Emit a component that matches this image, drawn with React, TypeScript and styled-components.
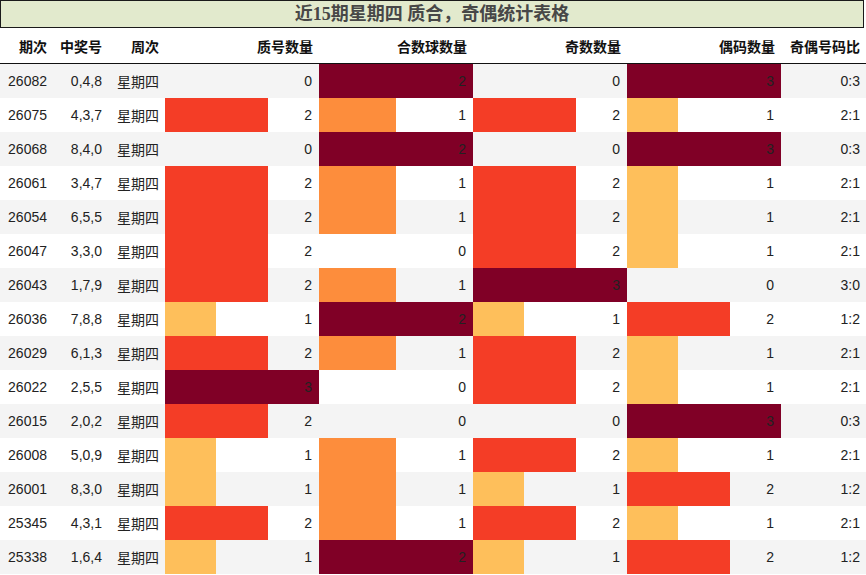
import React from "react";
import styled, { createGlobalStyle } from "styled-components";

const Global = createGlobalStyle`
  html, body { margin: 0; padding: 0; background: #fff; }
  body { font-family: "Liberation Sans", "Noto Sans CJK SC", sans-serif; }
  * { box-sizing: border-box; }
`;

const Page = styled.div`
  width: 866px;
`;

const Title = styled.div`
  width: 864px;
  height: 28px;
  border: 1px solid #1a1a1a;
  background: #e2eacd;
  color: #474747;
  font-family: "Liberation Serif", "Noto Sans CJK SC", serif;
  font-weight: bold;
  font-size: 18px;
  display: flex;
  align-items: center;
  justify-content: center;
  line-height: 1;
`;

const COLS = "53px 55px 57px 154px 154px 154px 154px 85px";

const HeaderRow = styled.div`
  display: grid;
  grid-template-columns: ${COLS};
  height: 36px;
  border-bottom: 1px solid #111;
`;

const HeadCell = styled.div`
  display: flex;
  align-items: center;
  justify-content: flex-end;
  padding-right: 6px;
  font-size: 14px;
  font-weight: bold;
  color: #111;
  white-space: nowrap;
`;

const Row = styled.div<{ $alt: boolean }>`
  display: grid;
  grid-template-columns: ${COLS};
  height: 34px;
  background: ${(p) => (p.$alt ? "#f4f4f4" : "#ffffff")};
`;

const Cell = styled.div`
  display: flex;
  align-items: center;
  justify-content: flex-end;
  padding-right: 6px;
  font-size: 14px;
  color: #222;
  white-space: nowrap;
`;

const BarCell = styled(Cell)<{ $pct: number; $color: string }>`
  padding-right: 7px;
  background: ${(p) =>
    p.$pct > 0
      ? `linear-gradient(to right, ${p.$color} 0, ${p.$color} ${p.$pct}%, transparent ${p.$pct}%)`
      : "transparent"};
`;

type R = [string, string, number, number, number, number, string];

const rows: R[] = [
  ["26082", "0,4,8", 0, 2, 0, 3, "0:3"],
  ["26075", "4,3,7", 2, 1, 2, 1, "2:1"],
  ["26068", "8,4,0", 0, 2, 0, 3, "0:3"],
  ["26061", "3,4,7", 2, 1, 2, 1, "2:1"],
  ["26054", "6,5,5", 2, 1, 2, 1, "2:1"],
  ["26047", "3,3,0", 2, 0, 2, 1, "2:1"],
  ["26043", "1,7,9", 2, 1, 3, 0, "3:0"],
  ["26036", "7,8,8", 1, 2, 1, 2, "1:2"],
  ["26029", "6,1,3", 2, 1, 2, 1, "2:1"],
  ["26022", "2,5,5", 3, 0, 2, 1, "2:1"],
  ["26015", "2,0,2", 2, 0, 0, 3, "0:3"],
  ["26008", "5,0,9", 1, 1, 2, 1, "2:1"],
  ["26001", "8,3,0", 1, 1, 1, 2, "1:2"],
  ["25345", "4,3,1", 2, 1, 2, 1, "2:1"],
  ["25338", "1,6,4", 1, 2, 1, 2, "1:2"],
];

const maxes = [3, 2, 3, 3];

function colorFor(r: number): string {
  if (r >= 0.99) return "#800026";
  if (r >= 0.6) return "#f43d26";
  if (r >= 0.45) return "#fd8d3c";
  return "#febf5b";
}

const headers = ["期次", "中奖号", "周次", "质号数量", "合数球数量", "奇数数量", "偶码数量", "奇偶号码比"];

export default function App() {
  return (
    <Page>
      <Global />
      <Title>近15期星期四 质合，奇偶统计表格</Title>
      <HeaderRow>
        {headers.map((h) => (
          <HeadCell key={h}>{h}</HeadCell>
        ))}
      </HeaderRow>
      {rows.map((r, i) => (
        <Row key={r[0]} $alt={i % 2 === 0}>
          <Cell>{r[0]}</Cell>
          <Cell>{r[1]}</Cell>
          <Cell>星期四</Cell>
          {[r[2], r[3], r[4], r[5]].map((v, k) => {
            const ratio = v / maxes[k];
            return (
              <BarCell key={k} $pct={ratio * 100} $color={colorFor(ratio)}>
                {v}
              </BarCell>
            );
          })}
          <Cell>{r[6]}</Cell>
        </Row>
      ))}
    </Page>
  );
}
